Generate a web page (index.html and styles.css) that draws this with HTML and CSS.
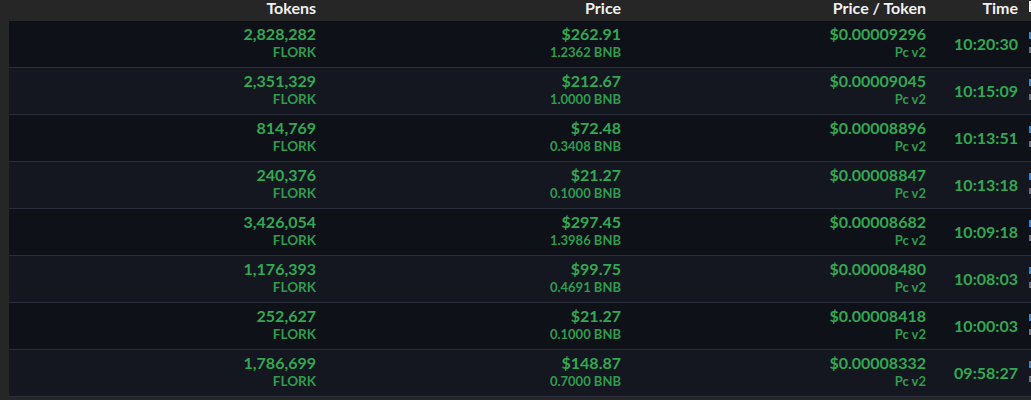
FILE: index.html
```html
<html>
<head>
	<meta charset="utf-8" />
	<title>trades</title>
	<link rel="stylesheet" href="styles.css">
</head>
<body>
<div class="trades">
	<div class="row head">
		<div class="cell">Tokens</div>
		<div class="cell">Price</div>
		<div class="cell">Price / Token</div>
		<div class="cell">Time</div>
		<div class="cell tx"></div>
	</div>

	<div class="row">
		<div class="cell"><b>2,828,282</b><span class="sym">FLORK</span></div>
		<div class="cell"><b>$262.91</b><span>1.2362 BNB</span></div>
		<div class="cell"><b>$0.00009296</b><span>Pc v2</span></div>
		<div class="cell time">10:20:30</div>
		<div class="cell tx"></div>
	</div>
	<div class="row">
		<div class="cell"><b>2,351,329</b><span class="sym">FLORK</span></div>
		<div class="cell"><b>$212.67</b><span>1.0000 BNB</span></div>
		<div class="cell"><b>$0.00009045</b><span>Pc v2</span></div>
		<div class="cell time">10:15:09</div>
		<div class="cell tx"></div>
	</div>
	<div class="row">
		<div class="cell"><b>814,769</b><span class="sym">FLORK</span></div>
		<div class="cell"><b>$72.48</b><span>0.3408 BNB</span></div>
		<div class="cell"><b>$0.00008896</b><span>Pc v2</span></div>
		<div class="cell time">10:13:51</div>
		<div class="cell tx"></div>
	</div>
	<div class="row">
		<div class="cell"><b>240,376</b><span class="sym">FLORK</span></div>
		<div class="cell"><b>$21.27</b><span>0.1000 BNB</span></div>
		<div class="cell"><b>$0.00008847</b><span>Pc v2</span></div>
		<div class="cell time">10:13:18</div>
		<div class="cell tx"></div>
	</div>
	<div class="row">
		<div class="cell"><b>3,426,054</b><span class="sym">FLORK</span></div>
		<div class="cell"><b>$297.45</b><span>1.3986 BNB</span></div>
		<div class="cell"><b>$0.00008682</b><span>Pc v2</span></div>
		<div class="cell time">10:09:18</div>
		<div class="cell tx"></div>
	</div>
	<div class="row">
		<div class="cell"><b>1,176,393</b><span class="sym">FLORK</span></div>
		<div class="cell"><b>$99.75</b><span>0.4691 BNB</span></div>
		<div class="cell"><b>$0.00008480</b><span>Pc v2</span></div>
		<div class="cell time">10:08:03</div>
		<div class="cell tx"></div>
	</div>
	<div class="row">
		<div class="cell"><b>252,627</b><span class="sym">FLORK</span></div>
		<div class="cell"><b>$21.27</b><span>0.1000 BNB</span></div>
		<div class="cell"><b>$0.00008418</b><span>Pc v2</span></div>
		<div class="cell time">10:00:03</div>
		<div class="cell tx"></div>
	</div>
	<div class="row">
		<div class="cell"><b>1,786,699</b><span class="sym">FLORK</span></div>
		<div class="cell"><b>$148.87</b><span>0.7000 BNB</span></div>
		<div class="cell"><b>$0.00008332</b><span>Pc v2</span></div>
		<div class="cell time">09:58:27</div>
		<div class="cell tx"></div>
	</div>
</div>
</body>
</html>
```

FILE: styles.css
```css
body{margin:0;background-color:#262626;font-family:Lato,"Open Sans",sans-serif;overflow:hidden;}

.trades{margin-left:9px;width:1022px;}
.row{display:grid;grid-template-columns:317px 305px 305px 92px 1fr;border-bottom:1px solid #2a2e3a;background-color:#0f1119;}
.row:nth-child(odd){background-color:#141720;}
.row.head{background-color:#262626;border-bottom:0;height:21px;}

.cell{padding:3px 10px 5px 0;text-align:right;color:#33a852;display:flex;flex-direction:column;align-items:flex-end;}
.cell b{font-size:16px;line-height:19px;font-weight:700;}
.cell span{font-size:13px;line-height:19px;font-weight:700;color:#2f9c4d;}
.cell span.sym{font-size:13.5px;}

.head .cell{padding:0 10px 0 0;color:#f0f0f0;font-size:16px;font-weight:700;line-height:15px;display:block;}

.time{justify-content:center;font-size:16px;font-weight:700;}

/* next column, cut off by the frame */
.cell.tx{padding:0;position:relative;}
.tx:before{content:"";position:absolute;left:1px;top:11px;width:2px;height:7px;background-color:#2d86d6;}
.tx:after{content:"";position:absolute;left:1px;top:26px;width:2px;height:6px;background-color:#6b7080;}
.head .tx:before{left:1px;top:1px;width:2px;height:11px;background-color:#f0f0f0;}
.head .tx:after{display:none;}
```
